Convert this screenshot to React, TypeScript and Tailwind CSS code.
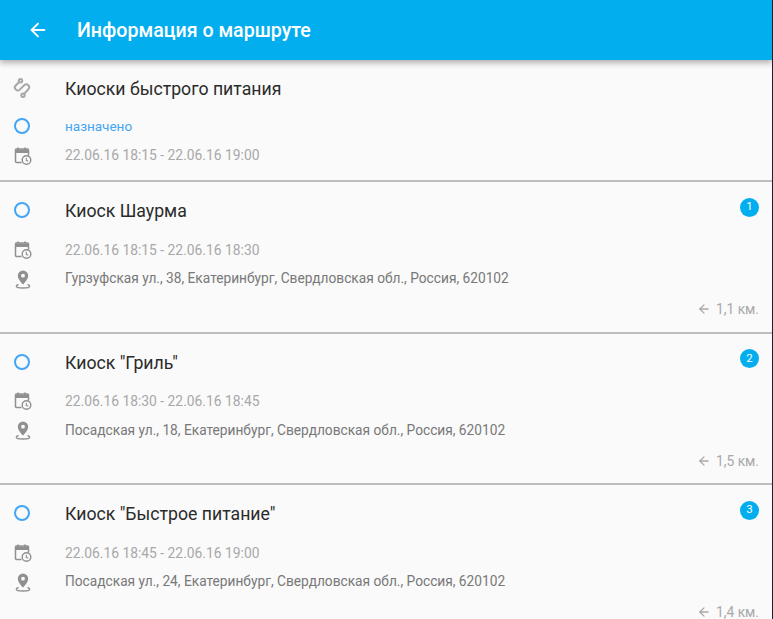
import { ArrowLeft } from 'lucide-react';

interface Stop {
  id: number;
  title: string;
  time: string;
  address: string;
  distance: string;
}

const stops: Stop[] = [
  {
    id: 1,
    title: 'Киоск Шаурма',
    time: '22.06.16 18:15 - 22.06.16 18:30',
    address: 'Гурзуфская ул., 38, Екатеринбург, Свердловская обл., Россия, 620102',
    distance: '1,1 км.',
  },
  {
    id: 2,
    title: 'Киоск "Гриль"',
    time: '22.06.16 18:30 - 22.06.16 18:45',
    address: 'Посадская ул., 18, Екатеринбург, Свердловская обл., Россия, 620102',
    distance: '1,5 км.',
  },
  {
    id: 3,
    title: 'Киоск "Быстрое питание"',
    time: '22.06.16 18:45 - 22.06.16 19:00',
    address: 'Посадская ул., 24, Екатеринбург, Свердловская обл., Россия, 620102',
    distance: '1,4 км.',
  },
];

const RouteIcon = () => (
  <svg width="20" height="20" viewBox="0 0 20 20" fill="none" stroke="#a8a8a8" strokeWidth="2" strokeLinecap="round">
    <circle cx="7.500" cy="2.800" r="1.700" />
    <circle cx="10" cy="17.200" r="1.700" />
    <path d="M6.200 4 2.700 7.500a2.900 2.900 0 0 0 4.100 4.100l4.400-4.400a2.900 2.900 0 0 1 4.100 4.100l-3.900 4.400" />
  </svg>
);

const StatusIcon = () => (
  <span className="block w-[16px] h-[16px] rounded-full border-2 border-[#42a5f5]" />
);

const CalendarIcon = () => (
  <svg width="18" height="19" viewBox="0 0 18 19" fill="none">
    <path d="M4 0.500v2.500M11 0.500v2.500" stroke="#909090" strokeWidth="1.600" />
    <path d="M7.500 15.500H2.500a1 1 0 0 1-1-1V3a1 1 0 0 1 1-1h11a1 1 0 0 1 1 1v5.500" stroke="#909090" strokeWidth="1.500" />
    <path d="M1.500 2.500h13v3.500h-13z" fill="#909090" />
    <circle cx="12.500" cy="13" r="4.300" stroke="#909090" strokeWidth="1.400" fill="#fafafa" />
    <path d="M12.300 10.800v2.500l1.900 1" stroke="#909090" strokeWidth="1.100" />
  </svg>
);

const PinIcon = () => (
  <svg width="16" height="19" viewBox="0 0 16 19" fill="none">
    <path d="M8 0.500a5.200 5.200 0 0 0-5.200 5.200C2.800 9.400 8 14.500 8 14.500s5.200-5.100 5.200-8.800A5.200 5.200 0 0 0 8 0.500z" fill="#909090" />
    <circle cx="8" cy="5.700" r="1.900" fill="#fafafa" />
    <path d="M3.500 14.500c-1.300.4-2.200 1-2.200 1.700 0 1.100 3 1.800 6.700 1.800s6.700-.7 6.700-1.800c0-.7-.9-1.300-2.200-1.700" stroke="#909090" strokeWidth="1.400" />
  </svg>
);

const StopCard = ({ stop }: { stop: Stop }) => (
  <div className="h-[151.5px] border-b-2 border-[#bdbdbd] pr-[13px]">
    <div className="flex items-center h-[56px]">
      <div className="w-[65px] pl-[14px] shrink-0">
        <StatusIcon />
      </div>
      <span className="text-[17.700px] text-[#2b2b2b] pt-[3px]">{stop.title}</span>
      <span className="ml-auto mb-[6px] w-[19px] h-[19px] rounded-full bg-[#03aeef] text-white text-[11.500px] flex items-center justify-center">
        {stop.id}
      </span>
    </div>
    <div className="flex items-center h-[26px] mt-[-1px]">
      <div className="w-[65px] pl-[14px] shrink-0">
        <CalendarIcon />
      </div>
      <span className="text-[13.850px] text-[#a8a8a8]">{stop.time}</span>
    </div>
    <div className="flex items-center h-[26px] mt-[3px]">
      <div className="w-[65px] pl-[15px] shrink-0">
        <PinIcon />
      </div>
      <span className="text-[13.730px] text-[#787878] pb-[1px]">{stop.address}</span>
    </div>
    <div className="flex items-center justify-end gap-[5px] mt-[7px] text-[13.800px] text-[#a8a8a8]">
      <ArrowLeft size={14} strokeWidth={2.200} />
      <span>{stop.distance}</span>
    </div>
  </div>
);

export default function App() {
  return (
    <div className="w-[773px] h-[619px] overflow-hidden bg-[#fafafa] border-r border-[#222222] font-['Roboto','Noto_Sans',sans-serif]">
      {/* Toolbar */}
      <header className="relative z-10 h-[60px] bg-[#03aeef] flex items-center shadow-[0_3px_6px_rgba(0,0,0,0.3)] text-white">
        <div className="w-[77px] pl-[27px] shrink-0">
          <ArrowLeft size={22} strokeWidth={2} />
        </div>
        <h1 className="text-[19.600px] font-medium pt-[2px]">Информация о маршруте</h1>
      </header>

      {/* Route summary */}
      <section className="h-[122px] border-b-2 border-[#bdbdbd]">
        <div className="flex items-center h-[56px]">
          <div className="w-[65px] pl-[13px] shrink-0">
            <RouteIcon />
          </div>
          <span className="text-[17.700px] text-[#2b2b2b] pt-[3px]">Киоски быстрого питания</span>
        </div>
        <div className="flex items-center h-[20px]">
          <div className="w-[65px] pl-[14px] shrink-0">
            <StatusIcon />
          </div>
          <span className="text-[13.500px] text-[#42a5f5]">назначено</span>
        </div>
        <div className="flex items-center h-[26px] mt-[7px]">
          <div className="w-[65px] pl-[14px] shrink-0">
            <CalendarIcon />
          </div>
          <span className="text-[13.850px] text-[#a8a8a8] pb-[2px]">22.06.16 18:15 - 22.06.16 19:00</span>
        </div>
      </section>

      {stops.map((stop) => (
        <StopCard key={stop.id} stop={stop} />
      ))}
    </div>
  );
}
